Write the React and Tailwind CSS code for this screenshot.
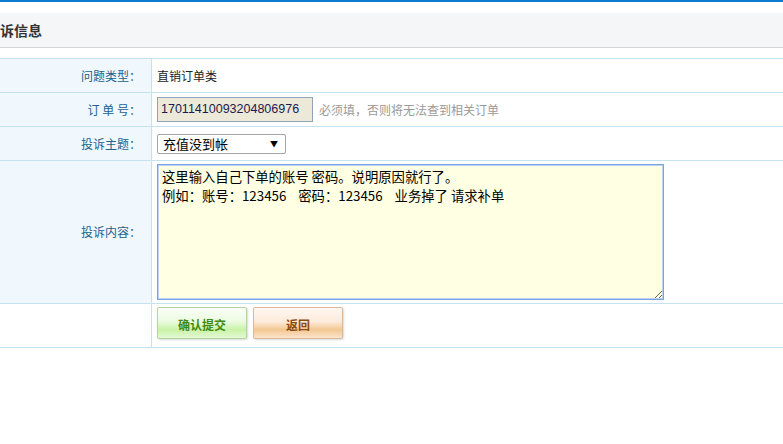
import React from "react";

const rowBorder = "border-b border-[#c4e2f0]";

function Label({ children, plain }) {
  return (
    <div
      className={`w-[152px] shrink-0 border-r border-[#c4e2f0] flex items-center justify-end pr-[10px] text-[12px] text-[#22618f] ${
        plain ? "bg-white" : "bg-[#f0f8fe]"
      }`}
    >
      {children}
    </div>
  );
}

export default function App() {
  return (
    <div
      className="w-full min-h-[444px] bg-white overflow-hidden"
      style={{ fontFamily: '"Noto Sans CJK SC", "Liberation Sans", sans-serif' }}
    >
      <div className="h-[2px] bg-[#0b7bd2]" />

      <div className="mt-[11px] h-[35px] bg-[#f5f6f8] border-b border-[#d4d4d4] flex items-center">
        <h2 className="text-[14px] font-bold text-[#333] leading-none">诉信息</h2>
      </div>

      <div className="mt-[10px] border-t border-[#c4e2f0]">
        <div className={`flex h-[34px] ${rowBorder}`}>
          <Label>问题类型：</Label>
          <div className="flex items-center pl-[5px] text-[12px] text-[#222]">直销订单类</div>
        </div>

        <div className={`flex h-[34px] ${rowBorder}`}>
          <Label>订 单 号：</Label>
          <div className="flex items-center pl-[5px] gap-[6px]">
            <div
              className="w-[156px] h-[25px] border border-[#8ea4bd] bg-[#ece9d8] flex items-center pl-[3px] text-[12.5px] text-[#1b1b4d]"
              style={{ fontFamily: '"Liberation Sans", Arial, sans-serif' }}
            >
              17011410093204806976
            </div>
            <span className="text-[12px] text-[#9a9a9a]">必须填，否则将无法查到相关订单</span>
          </div>
        </div>

        <div className={`flex h-[34px] ${rowBorder}`}>
          <Label>投诉主题：</Label>
          <div className="flex items-center pl-[5px]">
            <div className="w-[129px] h-[20px] border border-[#a6a6a6] rounded-[2px] bg-white flex items-center justify-between pl-[5px] pr-[7px]">
              <span className="text-[13px] text-black leading-none">充值没到帐</span>
              <span className="text-[8px] text-black leading-none">▼</span>
            </div>
          </div>
        </div>

        <div className={`flex h-[143px] ${rowBorder}`}>
          <Label>投诉内容：</Label>
          <div className="pl-[5px] pt-[3px]">
            <textarea
              readOnly
              className="block w-[507px] h-[136px] border border-[#7aa3dd] shadow-[inset_0_0_0_1px_#bcd3f3] bg-[#ffffe3] px-[4px] py-[2px] text-[13.33px] leading-[19px] text-black outline-none resize"
              defaultValue={"这里输入自己下单的账号 密码。说明原因就行了。\n例如：账号：123456    密码：123456    业务掉了 请求补单"}
            />
          </div>
        </div>

        <div className={`flex h-[44px] ${rowBorder}`}>
          <Label plain></Label>
          <div className="flex pl-[5px] pt-[3px] gap-[6px]">
            <button className="w-[90px] h-[32px] border border-[#b3d3a2] rounded-[2px] bg-[linear-gradient(#fbfff7_0%,#ebfbe0_45%,#c9f2a8_72%,#e3f9d2_100%)] shadow-[1px_1px_2px_rgba(0,0,0,0.15)] pt-[4px] text-[12px] font-bold text-[#3f8a0f]">
              确认提交
            </button>
            <button className="w-[90px] h-[32px] border border-[#d9b89c] rounded-[2px] bg-[linear-gradient(#fff7f1_0%,#fdebdc_45%,#f3c892_72%,#fbe3cb_100%)] shadow-[1px_1px_2px_rgba(0,0,0,0.15)] pt-[4px] text-[12px] font-bold text-[#8a4b12]">
              返回
            </button>
          </div>
        </div>
      </div>
    </div>
  );
}
